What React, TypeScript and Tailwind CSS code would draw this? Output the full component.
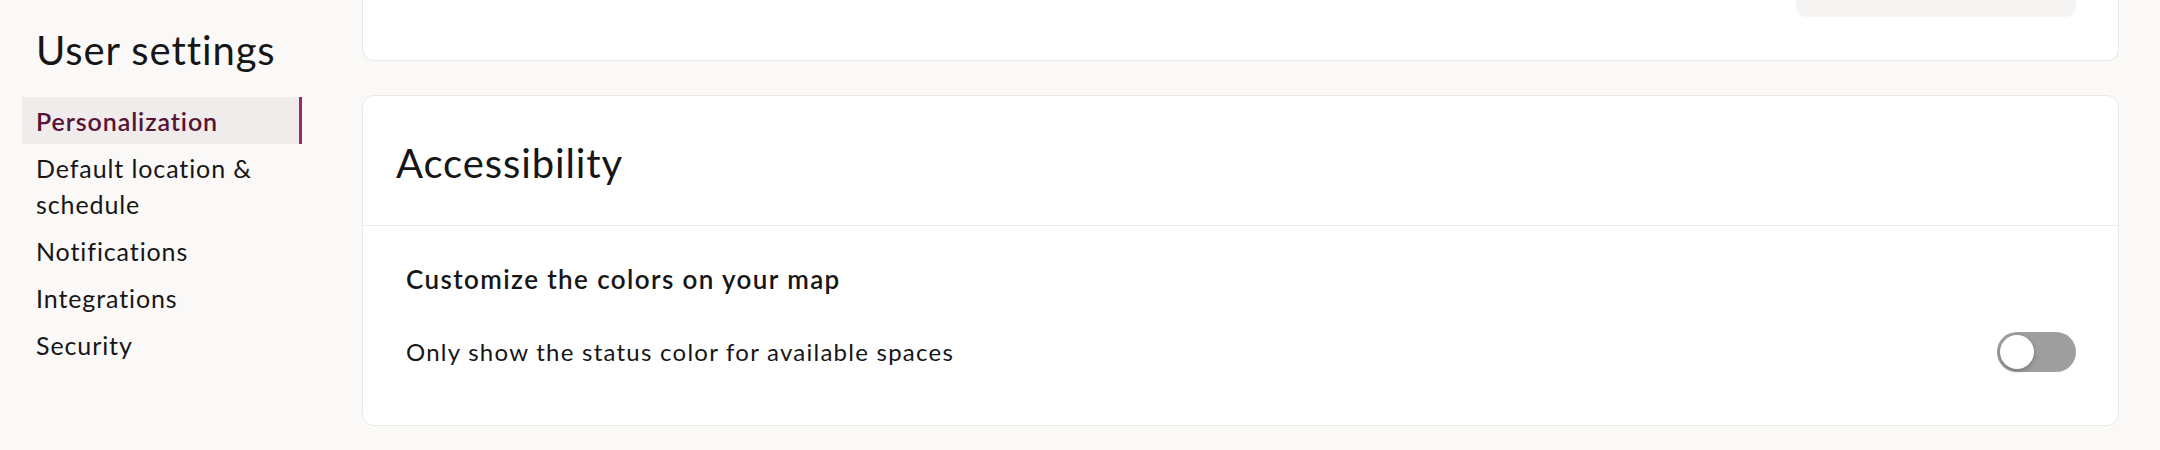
import { useState } from 'react';

const navItems = [
  'Personalization',
  'Default location & schedule',
  'Notifications',
  'Integrations',
  'Security',
];

export default function App() {
  const [active] = useState('Personalization');
  const [onlyAvailable, setOnlyAvailable] = useState(false);

  return (
    <div className="flex h-[450px] w-[2160px] overflow-hidden bg-[#faf9f8] font-['Lato',sans-serif] text-[#161616]">
      {/* Sidebar */}
      <aside className="w-[362px] shrink-0 pl-[22px]">
        <h1 className="mt-[26px] pl-[14px] text-[40px] leading-[48px] font-normal tracking-[0.9px]">User settings</h1>
        <nav className="mt-[23px] flex w-[280px] flex-col">
          {navItems.map((item) => {
            const isActive = item === active;
            return (
              <a
                key={item}
                href="#"
                className={`block py-[5.5px] pl-[14px] pr-6 text-[25px] leading-[36px] tracking-[0.9px] ${
                  isActive
                    ? 'border-r-[3px] border-[#9c2a6a] bg-[#efeceb] font-semibold text-[#561436]'
                    : 'text-[#161616]'
                }`}
              >
                {item}
              </a>
            );
          })}
        </nav>
      </aside>

      {/* Main content */}
      <main className="flex flex-1 flex-col gap-[34px] pr-[41px]">
        {/* Previous card, scrolled out of view */}
        <section className="-mt-[43px] flex justify-end rounded-b-[12px] border border-t-0 border-[#ebe9e6] bg-white pb-[43px] pr-[42px]">
          <div className="h-[60px] w-[280px] rounded-[10px] bg-[#f6f5f3]" />
        </section>

        {/* Accessibility */}
        <section className="rounded-[12px] border border-[#ebe9e6] bg-white">
          <div className="flex h-[130px] items-center border-b border-[#ebe9e6] px-[33px] pt-[5px]">
            <h2 className="text-[40px] leading-[48px] font-normal tracking-[0.9px]">Accessibility</h2>
          </div>
          <div className="pl-[43px] pr-[42px] pt-[35px] pb-[53px]">
            <h3 className="text-[26px] leading-[36px] font-semibold tracking-[1.4px]">Customize the colors on your map</h3>
            <div className="mt-[35px] flex items-center justify-between">
              <span className="text-[24px] leading-[36px] tracking-[1.25px]">Only show the status color for available spaces</span>
              <button
                type="button"
                role="switch"
                aria-checked={onlyAvailable}
                onClick={() => setOnlyAvailable(!onlyAvailable)}
                className={`flex h-[40px] w-[79px] items-center rounded-full p-[3px] ${
                  onlyAvailable ? 'justify-end bg-[#9c2a6a]' : 'justify-start bg-[#9e9e9e]'
                }`}
              >
                <span className="h-[34px] w-[34px] rounded-full bg-white shadow-[0_2px_4px_rgba(0,0,0,0.25)]" />
              </button>
            </div>
          </div>
        </section>
      </main>
    </div>
  );
}
